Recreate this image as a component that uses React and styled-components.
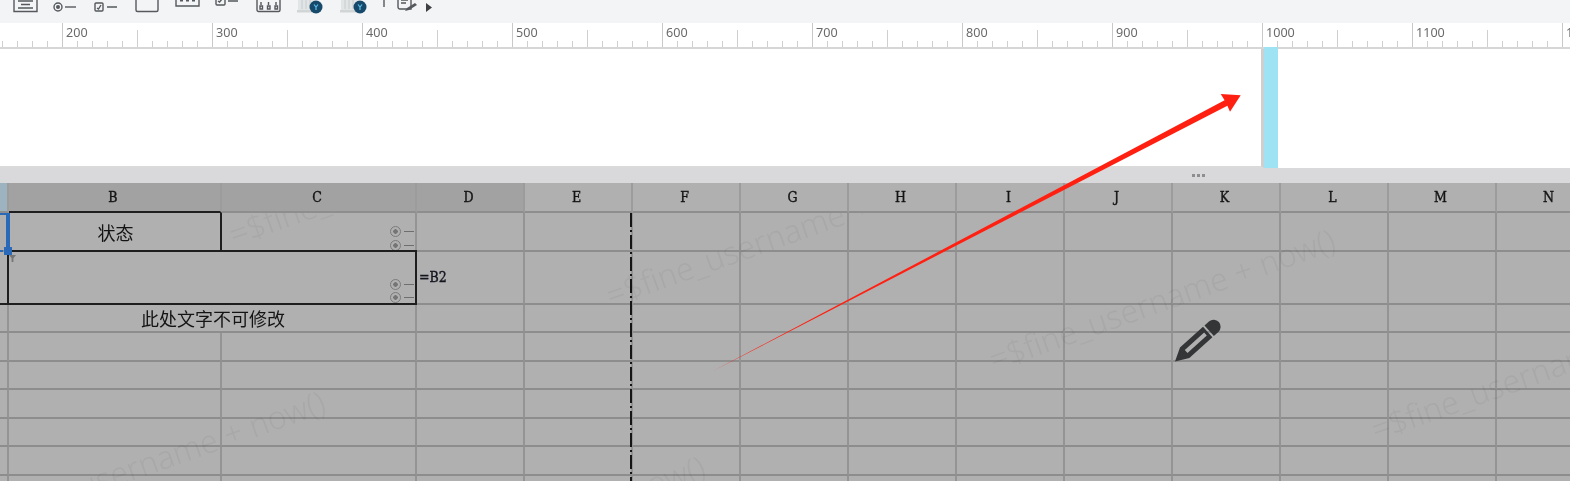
import React from "react";
import styled, { createGlobalStyle } from "styled-components";

const GlobalStyle = createGlobalStyle`
	html, body {
		margin: 0;
		padding: 0;
		background: #fff;
		overflow: hidden;
	}
	* {
		box-sizing: border-box;
	}
`;

const COLS = "9px 213px 195px repeat(11, 108px)";
const LETTERS = ["B", "C", "D", "E", "F", "G", "H", "I", "J", "K", "L", "M", "N"];
const RULER = ["", 200, 300, 400, 500, 600, 700, 800, 900, 1000, 1100, 1200];
const REST = LETTERS.slice(2);
const PLAIN_ROWS = [0, 1, 2, 3, 4, 5];
const MARKS = [
	{ left: 230, top: 22, id: 1 },
	{ left: 607, top: 83, id: 2 },
	{ left: 990, top: 147, id: 3 },
	{ left: 1372, top: 217, id: 4 },
	{ left: -20, top: 309, id: 5 },
	{ left: 360, top: 374, id: 6 },
];

const Page = styled.div`
	position: relative;
	width: 1570px;
	height: 481px;
	overflow: hidden;
	filter: blur(0.35px);
	font-family: "Liberation Sans", sans-serif;
`;

const Toolbar = styled.div`
	display: flex;
	align-items: flex-start;
	height: 23px;
	padding-left: 13px;
	background: #f3f4f6;
	overflow: hidden;
`;

const ToolIcon = styled.svg`
	flex: none;
	height: 30px;
	margin-top: -8px;
	margin-left: ${(p) => p.$gap || 0}px;
	fill: none;
	stroke: #55585c;
	stroke-width: 1.4;
`;

const Ruler = styled.div`
	display: flex;
	height: 26px;
	margin-left: -88px;
	border-bottom: 2px solid #d6d6d6;
	background: #fff;
`;

const RulerUnit = styled.div`
	flex: none;
	width: 150px;
	height: 24px;
	padding: 2px 0 0 3px;
	border-left: 1px solid #c9c9c9;
	background-image: linear-gradient(to right, #cfcfcf 1px, transparent 1px),
		linear-gradient(#cfcfcf, #cfcfcf);
	background-size: 15px 6px, 1px 17px;
	background-position: 14px 100%, 74px 100%;
	background-repeat: repeat-x, no-repeat;
	font-family: "Noto Sans", sans-serif;
	font-size: 12.6px;
	line-height: 15px;
	color: #6a6a6a;
`;

const Canvas = styled.div`
	display: flex;
	height: 119px;
	background: #fff;
`;

const CanvasSheet = styled.div`
	flex: none;
	width: 1264px;
	border-right: 3px solid #cfcfcf;
	border-bottom: 2px solid #dadada;
`;

const GuideBar = styled.div`
	flex: none;
	width: 14px;
	margin-top: -2px;
	background: #9de3f3;
`;

const Divider = styled.div`
	display: flex;
	justify-content: flex-end;
	gap: 2px;
	height: 15px;
	padding: 6px 365px 0 0;
	background: #d9d9db;
`;

const DividerDot = styled.span`
	width: 3px;
	height: 3px;
	background: #8e8e92;
`;

const SheetHeader = styled.div`
	display: grid;
	grid-template-columns: ${COLS};
	height: 30px;
	background: #b0b0b0;
`;

const HeaderCell = styled.div`
	display: flex;
	align-items: center;
	justify-content: center;
	padding-right: 3px;
	border-right: 2px solid #9c9c9c;
	border-bottom: 2px solid ${(p) => (p.$ink ? "#1e1e1e" : "#8e8e8e")};
	background: ${(p) => (p.$active ? "#9db3bf" : p.$dim ? "#a2a2a2" : "#b0b0b0")};
	font-family: "DejaVu Serif Condensed", "DejaVu Serif", serif;
	font-stretch: condensed;
	font-size: 14px;
	-webkit-text-stroke: 0.35px #141414;
	color: #141414;
`;

const SheetBody = styled.div`
	position: relative;
	display: grid;
	grid-template-columns: ${COLS};
	grid-template-rows: 39px 52.5px 28.5px repeat(6, 28.5px);
	height: 268px;
	background: #b0b0b0;
	overflow: hidden;
`;

const Cell = styled.div`
	display: flex;
	grid-column: ${(p) => p.$span || "auto"};
	border-right: 2px solid ${(p) => (p.$boxed ? "#1e1e1e" : "#949494")};
	border-bottom: 2px solid ${(p) => (p.$boxed || p.$darkBottom ? "#1e1e1e" : "#8d8d8d")};
	box-shadow: ${(p) =>
		p.$boxed ? "-2px 0 0 #1e1e1e, 0 -2px 0 #1e1e1e, -2px -2px 0 #1e1e1e" : "none"};
`;

const CellText = styled.span`
	margin: auto;
	padding-left: 2px;
	font-family: "Noto Sans CJK SC", sans-serif;
	font-size: 18px;
	line-height: 24px;
	color: #141414;
`;

const Formula = styled.span`
	align-self: center;
	margin: 0 0 0 2px;
	font-family: "DejaVu Serif Condensed", "DejaVu Serif", serif;
	font-stretch: condensed;
	font-size: 14px;
	-webkit-text-stroke: 0.35px #14141f;
	color: #14141f;
`;

const MarkStack = styled.div`
	display: flex;
	flex-direction: column;
	justify-content: flex-end;
	align-items: flex-end;
	gap: 3.5px;
	width: 100%;
	padding: 0 1px 0 0;
`;

const RadioMark = styled.div`
	display: flex;
	align-items: center;
	gap: 3px;
	height: 10px;
	&::before {
		content: "";
		width: 9px;
		height: 9px;
		border: 1px solid #7b7b7b;
		border-radius: 50%;
		background: radial-gradient(circle, #757575 0 2px, transparent 2.5px);
	}
	&::after {
		content: "";
		width: 10px;
		height: 1px;
		background: #6e6e6e;
	}
`;

const Watermark = styled.span`
	position: absolute;
	left: ${(p) => p.$left}px;
	top: ${(p) => p.$top}px;
	font-family: "Noto Sans", sans-serif;
	font-size: 32px;
	font-weight: 300;
	line-height: 30px;
	white-space: nowrap;
	color: rgba(0, 0, 0, 0.045);
	transform: translateY(-15px) rotate(-19.5deg);
	transform-origin: 0 50%;
	pointer-events: none;
`;

const PageBreak = styled.div`
	position: absolute;
	left: 630px;
	top: 0;
	bottom: 0;
	width: 2px;
	background: repeating-linear-gradient(
		to bottom,
		#151515 0 14px,
		transparent 14px 17px,
		#151515 17px 19px,
		transparent 19px 22px
	);
`;

const SelectionEdge = styled.div`
	position: absolute;
	left: 6px;
	top: 0;
	width: 4px;
	height: 39px;
	background: #2a68b8;
`;

const SelectionTop = styled.div`
	position: absolute;
	left: 0;
	top: 0;
	width: 8px;
	height: 2px;
	background: #2a68b8;
`;

const SelectionBottom = styled.div`
	position: absolute;
	left: 0;
	top: 37px;
	width: 6px;
	height: 2px;
	background: repeating-linear-gradient(to right, #2a68b8 0 3px, transparent 3px 4px);
`;

const FillHandle = styled.div`
	position: absolute;
	left: 4px;
	top: 34px;
	width: 8px;
	height: 8px;
	background: #2a68b8;
`;

const FillCursor = styled.svg`
	position: absolute;
	left: 9px;
	top: 41px;
	width: 7px;
	height: 8px;
	fill: #777;
`;

const ArrowLayer = styled.svg`
	position: absolute;
	inset: 0;
	width: 1570px;
	height: 481px;
	pointer-events: none;
`;

const Pencil = styled.svg`
	position: absolute;
	left: 1170px;
	top: 315px;
	width: 55px;
	height: 50px;
	fill: #333537;
`;

const Cursor = () => (
	<FillCursor viewBox="0 0 7 8">
		<path d="M0 1h7L4.4 4.2V8H2.6V4.2z" />
	</FillCursor>
);

const Radios = () => (
	<MarkStack>
		<RadioMark />
		<RadioMark />
	</MarkStack>
);

const App = () => {
	return (
		<Page>
			<GlobalStyle />
			<Toolbar>
				<ToolIcon width="25" viewBox="0 -8 25 30">
					<path d="M1-6h23v17.500H1z" />
					<path d="M5 1h15M8 4.500h9M5 8h15" />
				</ToolIcon>
				<ToolIcon $gap={15} width="24" viewBox="0 -8 24 30">
					<circle cx="5" cy="7" r="4" />
					<circle cx="5" cy="7" r="2" fill="#55585c" stroke="none" />
					<path d="M12 7h11" />
				</ToolIcon>
				<ToolIcon $gap={17} width="24" viewBox="0 -8 24 30">
					<rect x="1" y="3" width="8" height="8" rx="1" />
					<path d="M3 8l1.500 1L7 5M13 7h10" />
				</ToolIcon>
				<ToolIcon $gap={17} width="24" viewBox="0 -8 24 30">
					<path d="M1-4v14a1.500 1.500 0 0 0 1.500 1.500h19A1.500 1.500 0 0 0 23 10V-4" />
				</ToolIcon>
				<ToolIcon $gap={16} width="25" viewBox="0 -8 25 30">
					<path d="M1-6v12h23V-6" />
					<path d="M5 0h3M11 0h3M17 0h3" strokeWidth="3" />
				</ToolIcon>
				<ToolIcon $gap={15} width="24" viewBox="0 -8 24 30">
					<rect x="1" y="-4" width="9" height="9" rx="1" />
					<path d="M3 1l1.500 1L8-2M13 1h10" />
				</ToolIcon>
				<ToolIcon $gap={17} width="25" viewBox="0 -8 25 30">
					<rect x="1" y="-3" width="23" height="14.500" rx="1.500" />
					<path d="M5 2v3M12.500 2v3M20 2v3" />
					<path d="M4 6h2.500v3H4zM11.500 6h2.500v3h-2.500zM19 6h2.500v3H19z" />
				</ToolIcon>
				<ToolIcon $gap={16} width="26" viewBox="0 -8 26 30">
					<path d="M1-4h17v14H1z" fill="#e2e5e6" stroke="none" />
					<path d="M5-4v13M9-4v13M13-4v13" stroke="#d0d3d5" />
					<path d="M0 10h22v2.500H0z" fill="#d2d5d6" stroke="none" />
					<circle cx="19" cy="7" r="6.500" fill="#17496b" stroke="none" />
					<path d="M17 4.500l2 2.500 2-2.500M19 7v3" stroke="#5bc0e8" strokeWidth="1.200" />
				</ToolIcon>
				<ToolIcon $gap={17} width="27" viewBox="0 -8 27 30">
					<path d="M1-4h18v14H1z" fill="#e2e5e6" stroke="none" />
					<path d="M5-4v13M9-4v13M13-4v13" stroke="#d0d3d5" />
					<path d="M0 10h23v2.500H0z" fill="#d2d5d6" stroke="none" />
					<circle cx="20" cy="7" r="6.500" fill="#17496b" stroke="none" />
					<path d="M18 4.500l2 2.500 2-2.500M20 7v3" stroke="#5bc0e8" strokeWidth="1.200" />
				</ToolIcon>
				<ToolIcon $gap={16} width="2" viewBox="0 -8 2 30">
					<path d="M1-4v11" />
				</ToolIcon>
				<ToolIcon $gap={12} width="21" viewBox="0 -8 21 30">
					<path d="M1-4h13v13H3a2 2 0 0 1-2-2z" />
					<path d="M4 0h7M4 3h5" />
					<path d="M8 11l2-3 8-5 2 2-8 5z" fill="#55585c" stroke="none" />
				</ToolIcon>
				<ToolIcon $gap={8} width="6" viewBox="0 -8 6 30">
					<path d="M0 3l6 4.500L0 12z" fill="#3d4043" stroke="none" />
				</ToolIcon>
			</Toolbar>

			<Ruler>
				{RULER.map((n, i) => (
					<RulerUnit key={i}>{n}</RulerUnit>
				))}
			</Ruler>

			<Canvas>
				<CanvasSheet />
				<GuideBar />
			</Canvas>

			<Divider>
				<DividerDot />
				<DividerDot />
				<DividerDot />
			</Divider>

			<SheetHeader>
				<HeaderCell $active />
				{LETTERS.map((l, i) => (
					<HeaderCell key={l} $dim={i < 3} $ink={l === "B"}>
						{l}
					</HeaderCell>
				))}
			</SheetHeader>

			<SheetBody>
				<Cell />
				<Cell $boxed>
					<CellText>状态</CellText>
				</Cell>
				<Cell>
					<Radios />
				</Cell>
				{REST.map((l) => (
					<Cell key={l} />
				))}

				<Cell $darkBottom />
				<Cell $boxed $span="span 2">
					<Radios />
				</Cell>
				{REST.map((l) => (
					<Cell key={l}>{l === "D" && <Formula>=B2</Formula>}</Cell>
				))}

				<Cell />
				<Cell $span="span 2">
					<CellText>此处文字不可修改</CellText>
				</Cell>
				{REST.map((l) => (
					<Cell key={l} />
				))}

				{PLAIN_ROWS.map((r) => (
					<React.Fragment key={r}>
						<Cell />
						<Cell />
						<Cell />
						{REST.map((l) => (
							<Cell key={l} />
						))}
					</React.Fragment>
				))}

				{MARKS.map((m) => (
					<Watermark key={m.id} $left={m.left} $top={m.top}>
						=$fine_username + now()
					</Watermark>
				))}

				<PageBreak />
				<SelectionTop />
				<SelectionEdge />
				<SelectionBottom />
				<FillHandle />
				<Cursor />
			</SheetBody>

			<ArrowLayer viewBox="0 0 1570 481">
				<polygon
					fill="#ff2012"
					points="713,371 1224.600,100.300 1220.700,94 1240.700,95.300 1230,111.700 1227.400,105.700"
				/>
			</ArrowLayer>

			<Pencil viewBox="0 0 55 50">
				<g transform="translate(5 46.500) rotate(-42)">
					<path fillRule="evenodd" d="M0 0L13-7H44V7H13zM15-2V2H41V-2z" />
					<path d="M46-7H52A7 7 0 0 1 59 0A7 7 0 0 1 52 7H46z" />
				</g>
			</Pencil>
		</Page>
	);
};

export default App;
